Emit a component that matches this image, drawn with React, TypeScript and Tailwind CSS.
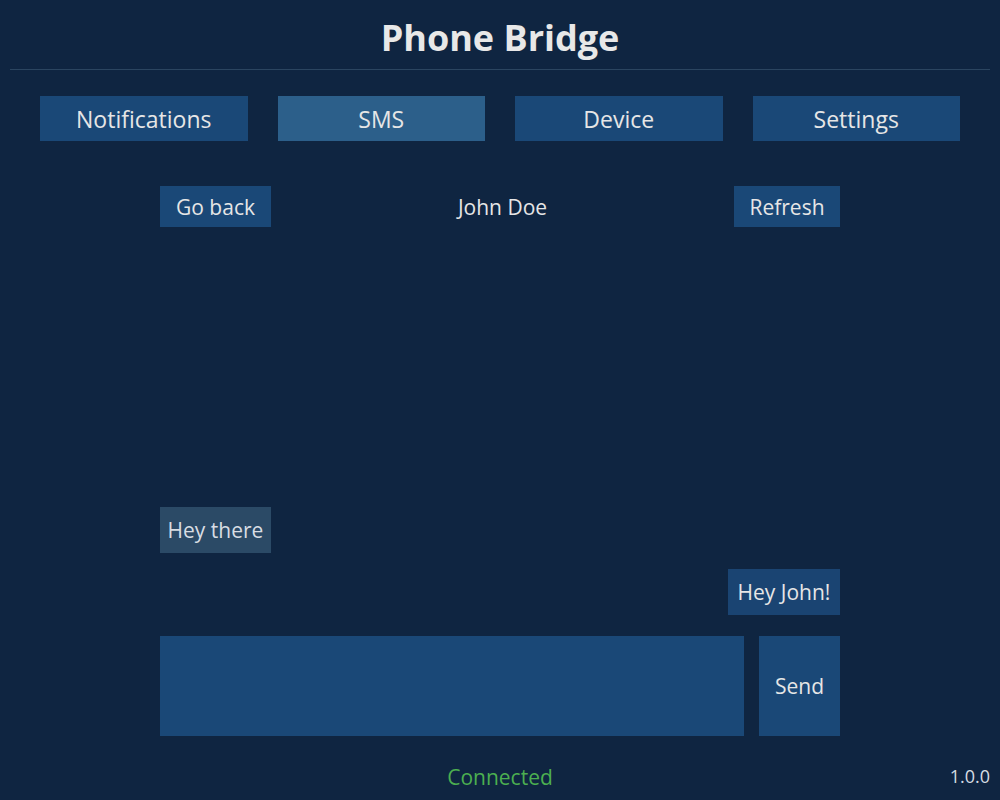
import React from "react";

export default function App() {
  const tabs = ["Notifications", "SMS", "Device", "Settings"];
  return (
    <div
      className="w-full h-[800px] bg-[#0f2541] flex flex-col text-[#e6e6e6]"
      style={{ fontFamily: '"Open Sans", "Noto Sans", sans-serif' }}
    >
      <div className="h-[69px] flex items-center justify-center pt-[6px]">
        <h1 className="text-[36px] font-bold leading-none text-[#e8e8e8]">Phone Bridge</h1>
      </div>
      <div className="mx-[10px] h-px bg-[#2b4560]" />
      <div className="grid grid-cols-4 gap-[30px] px-[40px] mt-[26px]">
        {tabs.map((t) => (
          <button
            key={t}
            className={`h-[45px] pt-[2px] text-[23px] text-[#e6e6e6] ${t === "SMS" ? "bg-[#2c5f8a]" : "bg-[#1a4877]"}`}
          >
            {t}
          </button>
        ))}
      </div>
      <div className="w-[680px] mx-auto mt-[45px] flex-1 flex flex-col min-h-0">
        <div className="flex items-center justify-between h-[41px]">
          <button className="h-[41px] w-[111px] pt-[2px] bg-[#1a4877] text-[21px] text-[#e6e6e6]">Go back</button>
          <span className="text-[21px] pt-[2px] text-[#e6e6e6]">John Doe</span>
          <button className="h-[41px] w-[106px] pt-[2px] bg-[#1a4877] text-[21px] text-[#e6e6e6]">Refresh</button>
        </div>
        <div className="flex-1 flex flex-col justify-end gap-[16px] pb-[21px]">
          <div className="self-start h-[46px] w-[111px] pt-[2px] bg-[#2b4a66] flex items-center justify-center text-[21px] text-[#d8dde3]">
            Hey there
          </div>
          <div className="self-end h-[46px] w-[112px] pt-[2px] bg-[#1a4472] flex items-center justify-center text-[21px] text-[#e6e6e6]">
            Hey John!
          </div>
        </div>
        <div className="flex gap-[15px] h-[100px]">
          <textarea className="flex-1 bg-[#1a4877] resize-none outline-none text-[#e6e6e6] p-2" />
          <button className="w-[81px] pt-[2px] bg-[#1a4877] text-[21px] text-[#e6e6e6]">Send</button>
        </div>
      </div>
      <div className="relative h-[64px] flex justify-center pt-[28px]">
        <span className="text-[21px] leading-[26px] text-[#4caf50] h-[26px]">Connected</span>
        <span className="absolute right-[10px] top-[27px] text-[18px] leading-[26px] text-[#d5dce3]">1.0.0</span>
      </div>
    </div>
  );
}
